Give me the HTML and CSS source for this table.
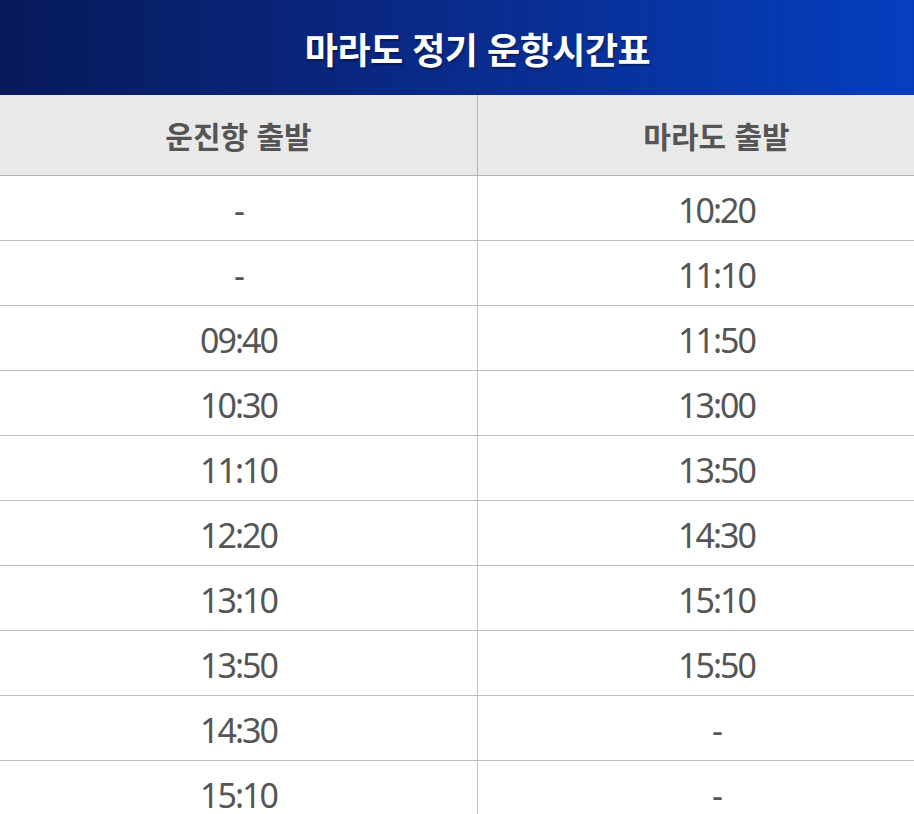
FILE: index.html
```html
<!DOCTYPE html>
<html lang="ko">
<head>
<meta charset="utf-8">
<link rel="stylesheet" href="styles.css">
</head>
<body>
<div class="wrap">
  <div class="title">마라도 정기 운항시간표</div>
  <table class="timetable">
    <thead>
      <tr><th>운진항 출발</th><th>마라도 출발</th></tr>
    </thead>
    <tbody>
      <tr><td>-</td><td>10:20</td></tr>
      <tr><td>-</td><td>11:10</td></tr>
      <tr><td>09:40</td><td>11:50</td></tr>
      <tr><td>10:30</td><td>13:00</td></tr>
      <tr><td>11:10</td><td>13:50</td></tr>
      <tr><td>12:20</td><td>14:30</td></tr>
      <tr><td>13:10</td><td>15:10</td></tr>
      <tr><td>13:50</td><td>15:50</td></tr>
      <tr><td>14:30</td><td>-</td></tr>
      <tr><td>15:10</td><td>-</td></tr>
    </tbody>
  </table>
</div>
</body>
</html>
```
FILE: styles.css
```css
html, body {
  margin: 0;
  padding: 0;
  overflow: hidden;
  background: #ffffff;
}
body {
  font-family: "Noto Sans CJK KR", "Noto Sans", sans-serif;
}
.wrap {
  width: 955px;
}
.title {
  height: 95px;
  display: flex;
  align-items: center;
  justify-content: center;
  background: linear-gradient(90deg, #07195a 0%, #0a2a88 45%, #0440c4 100%);
  color: #ffffff;
  font-size: 36px;
  font-weight: 700;
  letter-spacing: -0.5px;
  text-shadow: 1px 2px 2px rgba(0,0,0,0.35);
}
.timetable {
  width: 100%;
  border-collapse: collapse;
  table-layout: fixed;
}
.timetable th {
  height: 80px;
  padding: 0;
  background: #e9e9e9;
  color: #555555;
  font-size: 30px;
  font-weight: 700;
  letter-spacing: 0;
  border-bottom: 1px solid #b4b4b4;
  border-left: 1px solid #b4b4b4;
}
.timetable td {
  box-sizing: border-box;
  height: 65px;
  padding: 3px 0 0 0;
  text-align: center;
  color: #555555;
  font-family: "Noto Sans", "Noto Sans CJK KR", sans-serif;
  font-size: 34px;
  font-weight: 400;
  letter-spacing: -2px;
  line-height: 1;
  border-bottom: 1px solid #bdbdbd;
  border-left: 1px solid #bdbdbd;
}
.timetable th:first-child,
.timetable td:first-child {
  border-left: none;
}
```
